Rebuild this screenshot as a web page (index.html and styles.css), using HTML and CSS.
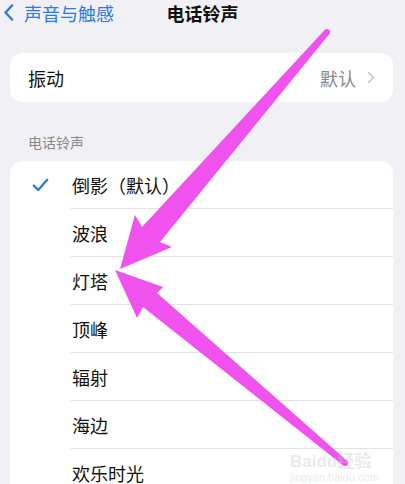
FILE: index.html
```html
<!DOCTYPE html>
<html lang="zh-CN">
<head>
<meta charset="utf-8">
<title>电话铃声</title>
<link rel="stylesheet" href="styles.css">
</head>
<body>
<div class="screen">
  <header class="nav">
    <div class="nav-back">
      <svg class="chev-back" width="11" height="17" viewBox="0 0 11 17"><path d="M9 1.5 L2.5 8.5 L9 15.5" fill="none" stroke="currentColor" stroke-width="2.4" stroke-linecap="round" stroke-linejoin="round"/></svg>
      <span>声音与触感</span>
    </div>
    <div class="nav-title">电话铃声</div>
    <div></div>
  </header>

  <main class="content">
    <section class="card card-single">
      <div class="cell">
        <span class="cell-label">振动</span>
        <span class="cell-value">默认</span>
        <svg class="chev" width="8" height="13" viewBox="0 0 8 13"><path d="M1.5 1.5 L6.5 6.5 L1.5 11.5" fill="none" stroke="currentColor" stroke-width="1.6" stroke-linecap="round" stroke-linejoin="round"/></svg>
      </div>
    </section>

    <div class="section-header">电话铃声</div>

    <section class="card list">
      <div class="row">
        <div class="row-check">
          <svg width="17" height="14" viewBox="0 0 17 14"><path d="M1.8 7.6 L6.2 12 L15.2 1.8" fill="none" stroke="currentColor" stroke-width="2.3" stroke-linecap="round" stroke-linejoin="round"/></svg>
        </div>
        <div class="row-label">倒影（默认）</div>
      </div>
      <div class="row"><div class="row-check"></div><div class="row-label">波浪</div></div>
      <div class="row"><div class="row-check"></div><div class="row-label">灯塔</div></div>
      <div class="row"><div class="row-check"></div><div class="row-label">顶峰</div></div>
      <div class="row"><div class="row-check"></div><div class="row-label">辐射</div></div>
      <div class="row"><div class="row-check"></div><div class="row-label">海边</div></div>
      <div class="row"><div class="row-check"></div><div class="row-label">欢乐时光</div></div>
    </section>
  </main>

  <svg class="arrows" width="405" height="484" viewBox="0 0 405 484">
    <g fill="#f052ee">
      <polygon points="324.7,30 142,227 135,215 120,269 172,247 160,242 329.3,34"/>
      <circle cx="327" cy="32" r="3"/>
      <polygon points="115,270 163,287 157,293 347,460.7 343,465.3 143,307 137,318"/>
      <circle cx="345" cy="463" r="3"/>
    </g>
  </svg>

  <div class="watermark">
    <div class="wm-brand">Baidu经验</div>
    <div class="wm-url">jingyan.baidu.com</div>
  </div>
</div>
</body>
</html>
```

FILE: styles.css
```css
* {
  box-sizing: border-box;
}

html, body {
  margin: 0;
  padding: 0;
}

body {
  background: #f0f0f5;
  font-family: "Noto Sans CJK SC", "Noto Sans", sans-serif;
  color: #111;
  overflow: hidden;
}

.screen {
  position: relative;
  width: 405px;
  height: 484px;
  overflow: hidden;
}

.nav {
  display: grid;
  grid-template-columns: 1fr auto 1fr;
  align-items: center;
  height: 24px;
  padding-top: 1px;
}

.nav-back {
  display: flex;
  align-items: center;
  gap: 10px;
  padding-left: 3px;
  color: #2f7ad6;
  font-size: 18px;
  line-height: 22px;
}

.chev-back {
  display: block;
  flex: none;
}

.nav-title {
  font-size: 18px;
  line-height: 22px;
  font-weight: 700;
  color: #111;
}

.content {
  padding: 0 12px 0 10px;
}

.card {
  background: #fff;
  border-radius: 12px;
}

.card-single {
  margin-top: 29px;
  height: 49px;
}

.cell {
  display: flex;
  align-items: center;
  height: 49px;
  padding: 0 18px 0 18px;
}

.cell-label {
  font-size: 18px;
  line-height: 24px;
  flex: 1;
}

.cell-value {
  font-size: 18px;
  line-height: 24px;
  color: #8a8a8e;
}

.chev {
  display: block;
  margin-left: 11px;
  color: #c2c2c6;
}

.section-header {
  margin-top: 30px;
  margin-bottom: 9px;
  padding-left: 18px;
  font-size: 14px;
  line-height: 20px;
  color: #8a8a8e;
}

.list {
  border-radius: 12px 12px 0 0;
}

.row {
  display: flex;
  height: 48px;
}

.row-check {
  width: 61px;
  flex: none;
  display: flex;
  align-items: center;
  padding-left: 22px;
  color: #2f7ad6;
}

.row-check svg {
  display: block;
}

.row-label {
  flex: 1;
  display: flex;
  align-items: center;
  padding-left: 1px;
  font-size: 18px;
  border-bottom: 1px solid #e2e2e5;
}

.row:last-child .row-label {
  border-bottom: none;
}

.arrows {
  position: absolute;
  left: 0;
  top: 0;
  pointer-events: none;
}

.watermark {
  position: absolute;
  left: 290px;
  top: 453px;
  color: rgba(200, 200, 205, 0.4);
  font-family: "Liberation Sans", "Noto Sans CJK SC", sans-serif;
  pointer-events: none;
}

.wm-brand {
  font-size: 17px;
  line-height: 18px;
  font-weight: 700;
}

.wm-url {
  font-size: 11px;
  line-height: 12px;
}
```
